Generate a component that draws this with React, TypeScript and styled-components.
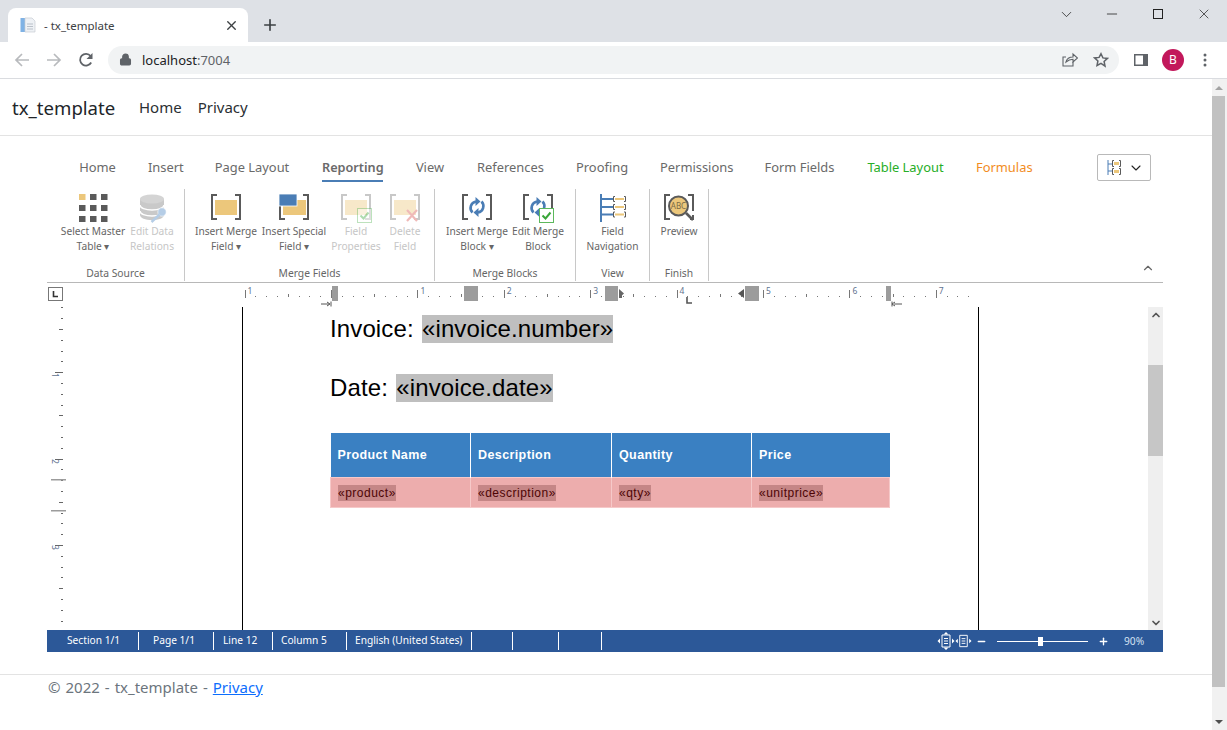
import { Fragment } from "react";
import styled, { createGlobalStyle } from "styled-components";
import { ChevronDown, ChevronUp, Lock, Minus, Plus, X } from "lucide-react";

const UI_FONT = `"Noto Sans", "Open Sans", sans-serif`;
const DOC_FONT = `"Liberation Sans", Arial, sans-serif`;

const GlobalStyle = createGlobalStyle`
  html, body {
    margin: 0;
    padding: 0;
    height: 730px;
    overflow: hidden;
    background: #fff;
    font-family: ${UI_FONT};
  }
  * { box-sizing: border-box; }
`;

const Window = styled.div`
  width: 1227px;
  height: 730px;
  display: flex;
  flex-direction: column;
`;

/* browser chrome */
const TabStrip = styled.div`
  height: 42px;
  background: #dee1e6;
  display: flex;
  align-items: flex-end;
  padding-left: 8px;
`;

const Tab = styled.div`
  position: relative;
  width: 240px;
  height: 34px;
  background: #fff;
  border-radius: 8px 8px 0 0;
  display: flex;
  align-items: center;
  padding: 0 9px 0 12px;
  font-size: 11.5px;
  color: #3c4043;
`;

const TabTitle = styled.span`
  margin-left: 8px;
  flex: 1;
`;

const NewTab = styled.div`
  width: 44px;
  height: 34px;
  display: flex;
  align-items: center;
  justify-content: center;
  color: #3c4043;
`;

const WindowControls = styled.div`
  margin-left: auto;
  align-self: flex-start;
  display: flex;
  height: 28px;
`;

const WindowButton = styled.div`
  width: 46px;
  height: 28px;
  display: flex;
  align-items: center;
  justify-content: center;
  color: #222;
`;

const Toolbar = styled.div`
  height: 37px;
  background: #fff;
  border-bottom: 1px solid #dadce0;
  display: flex;
  align-items: center;
  padding: 0 0 1px 6px;
`;

const NavIcon = styled.div`
  width: 32px;
  height: 28px;
  display: flex;
  align-items: center;
  justify-content: center;
`;

const Omnibox = styled.div`
  width: 1011px;
  height: 28px;
  margin-left: 6px;
  margin-right: 6px;
  border-radius: 14px;
  background: #f1f3f4;
  display: flex;
  align-items: center;
  padding: 0 2px 0 11px;
  color: #5f6368;
`;

const Url = styled.span`
  margin-left: 10px;
  font-size: 13px;
  color: #202124;
  flex: 1;
  & > span {
    color: #5f6368;
  }
`;

const Avatar = styled.div`
  width: 22px;
  height: 22px;
  border-radius: 50%;
  background: #c2185b;
  color: #fff;
  font-size: 12px;
  display: flex;
  align-items: center;
  justify-content: center;
`;

/* page */
const Viewport = styled.div`
  flex: 1;
  display: flex;
  min-height: 0;
`;

const Page = styled.div`
  flex: 1;
  display: flex;
  flex-direction: column;
  min-width: 0;
`;

const OuterScroll = styled.div`
  width: 15px;
  background: #f1f1f1;
  display: flex;
  flex-direction: column;
  align-items: center;
  padding: 0 2px 0 0;
`;

const OuterThumb = styled.div`
  width: 13px;
  height: 591px;
  background: #c1c1c1;
`;

const ArrowBox = styled.div`
  height: ${(p) => p.$h}px;
  display: flex;
  align-items: center;
  justify-content: center;
`;

const Triangle = styled.div`
  width: 0;
  height: 0;
  border-left: 4px solid transparent;
  border-right: 4px solid transparent;
  ${(p) => (p.$down ? "border-top" : "border-bottom")}: 4px solid ${(p) => p.$color};
`;

const Navbar = styled.nav`
  height: 57px;
  border-bottom: 1px solid #e3e3e3;
  display: flex;
  align-items: center;
  padding: 0 12px;
`;

const Brand = styled.div`
  font-size: 18.6px;
  color: #212529;
  width: 127px;
`;

const NavLink = styled.a`
  font-size: 15px;
  color: #2b2f33;
  margin-right: 16px;
`;

const EditorShell = styled.div`
  margin: 18px 0 0 47px;
  width: 1116px;
  display: flex;
  flex-direction: column;
`;

const RibbonTabs = styled.div`
  height: 35px;
  display: flex;
  align-items: flex-start;
  padding-left: 32px;
  position: relative;
`;

const RibbonTab = styled.div`
  height: 28px;
  width: ${(p) => p.$w}px;
  margin-right: 32px;
  white-space: nowrap;
  text-align: center;
  font-size: ${(p) => (p.$active ? 12.7 : 12.9)}px;
  line-height: 27px;
  color: ${(p) => p.$color || "#6a6a6a"};
  font-weight: ${(p) => (p.$active ? 600 : 400)};
  border-bottom: 2px solid ${(p) => (p.$active ? "#4a7db5" : "transparent")};
`;

const LayoutPicker = styled.div`
  position: absolute;
  left: 1050px;
  top: 0;
  width: 54px;
  height: 27px;
  border: 1px solid #b9b9b9;
  border-radius: 2px;
  display: flex;
  align-items: center;
  padding-left: 9px;
  gap: 6px;
`;

const Ribbon = styled.div`
  position: relative;
  height: 94px;
  border-bottom: 1px solid #b8b8b8;
  display: flex;
  align-items: flex-start;
`;

const Group = styled.div`
  height: 92px;
  border-right: 1px solid #c8c8c8;
  width: ${(p) => p.$w}px;
  padding-left: ${(p) => p.$pad}px;
  display: flex;
  flex-direction: column;
`;

const GroupButtons = styled.div`
  flex: 1;
  display: flex;
`;

const GroupLabel = styled.div`
  height: 14px;
  margin-left: ${(p) => -p.$pad}px;
  margin-bottom: 1px;
  text-align: center;
  font-size: 10.3px;
  line-height: 14px;
  color: #666;
`;

const RibbonButton = styled.div`
  width: ${(p) => p.$w}px;
  padding-top: 4px;
  display: flex;
  flex-direction: column;
  align-items: center;
`;

const ButtonText = styled.div`
  margin-top: 1px;
  font-size: 10.2px;
  line-height: 15px;
  text-align: center;
  white-space: nowrap;
  color: ${(p) => (p.$off ? "#c6c6c6" : "#666")};
`;

const Collapse = styled.div`
  position: absolute;
  right: 8px;
  bottom: 7px;
  color: #666;
  display: flex;
`;

const RulerRow = styled.div`
  height: 24px;
  display: flex;
  align-items: flex-start;
`;

const TabStopButton = styled.div`
  width: 15px;
  height: 14px;
  margin: 4px 0 0 1px;
  border: 1px solid #777;
  display: flex;
  align-items: center;
  justify-content: center;
`;

const RulerLeft = styled.div`
  width: 177px;
`;

const EditorRow = styled.div`
  height: 323px;
  display: flex;
  overflow: hidden;
`;

const VerticalRuler = styled.div`
  width: 195px;
`;

const DocPage = styled.div`
  width: 737px;
  height: 323px;
  border-left: 1px solid #000;
  border-right: 1px solid #000;
  padding: 8px 0 0 87px;
  font-family: ${DOC_FONT};
  color: #000;
`;

const DocLine = styled.div`
  font-size: 24px;
  line-height: 28px;
  letter-spacing: 0.12px;
  word-spacing: 1.5px;
  margin-bottom: 31px;
`;

const Field = styled.span`
  background: #bfbfbf;
  display: inline-block;
  height: 28px;
`;

const Table = styled.table`
  border-collapse: collapse;
  table-layout: fixed;
  width: 559px;
`;

const HeadCell = styled.th`
  width: ${(p) => p.$w}px;
  height: 44px;
  background: #3a80c2;
  color: #fff;
  text-align: left;
  padding: 0 0 0 7px;
  font-size: 12.5px;
  letter-spacing: 0.4px;
  font-weight: 700;
  border-left: 1px solid #fff;
  &:first-child {
    border-left: 0;
  }
`;

const BodyCell = styled.td`
  height: 30px;
  background: #edadad;
  padding: 2px 0 0 7px;
  font-size: 12px;
  letter-spacing: 0.5px;
  color: #4d0505;
  border: 1px solid #f6c9c9;
`;

const TableField = styled.span`
  background: #c58686;
  display: inline-block;
  height: 16px;
  line-height: 16px;
`;

const InnerScroll = styled.div`
  margin-left: 169px;
  width: 15px;
  background: #efefef;
  display: flex;
  flex-direction: column;
  align-items: center;
`;

const InnerThumb = styled.div`
  margin-top: 43px;
  width: 15px;
  height: 91px;
  background: #c6c6c6;
`;

const Spacer = styled.div`
  flex: 1;
`;

const StatusBar = styled.div`
  height: 22px;
  background: #2c5898;
  display: flex;
  align-items: center;
  color: #fff;
  font-size: 10.2px;
`;

const StatusCell = styled.div`
  width: ${(p) => p.$w}px;
  height: 18px;
  line-height: 17px;
  padding-left: ${(p) => p.$pad}px;
  border-right: 1px solid #fff;
  white-space: nowrap;
`;

const StatusRight = styled.div`
  margin-left: auto;
  padding-right: 14px;
  display: flex;
  align-items: center;
`;

const ZoomOut = styled.div`
  margin-left: 4px;
  display: flex;
`;

const ZoomSlider = styled.div`
  position: relative;
  width: 91px;
  height: 1px;
  margin: 0 10px;
  background: #fff;
`;

const ZoomThumb = styled.div`
  position: absolute;
  left: 41px;
  top: -4px;
  width: 5px;
  height: 9px;
  background: #fff;
`;

const ZoomValue = styled.div`
  width: 40px;
  padding-left: 15px;
  color: #d5e2f3;
`;

const Footer = styled.footer`
  margin-top: 22px;
  border-top: 1px solid #e3e3e3;
  padding: 0 0 0 48px;
  font-size: 15px;
  line-height: 24px;
  word-spacing: 1.1px;
  color: #6c757d;
  & > a {
    color: #0d6efd;
    text-decoration: underline;
  }
`;

const GRAY = "#5a5a5a";
const GOLD = "#ecc77b";
const BLUE = "#4a7db5";

const Brackets = ({ color = GRAY }: { color?: string }) => (
  <>
    <path d="M7 2H2V26H7" fill="none" stroke={color} strokeWidth="2" />
    <path d="M25 2H30V26H25" fill="none" stroke={color} strokeWidth="2" />
  </>
);

const IconSvg = styled.svg`
  display: block;
  flex: none;
`;

const Icon32 = ({ children }: { children: React.ReactNode }) => (
  <IconSvg width="32" height="30" viewBox="0 0 32 30">
    {children}
  </IconSvg>
);

const CheckBadge = ({ faded }: { faded?: boolean }) => (
  <g opacity={faded ? 0.4 : 1}>
    <rect x="17.5" y="15.5" width="14" height="14" fill="#fff" stroke="#5cb85c" />
    <path d="M20.5 22.5l3 3 5-6" fill="none" stroke="#3aa63a" strokeWidth="2" />
  </g>
);

const Cycle = () => (
  <g>
    <path d="M15 8.5a6.5 6.5 0 0 0-3.5 11" fill="none" stroke={BLUE} strokeWidth="2.6" />
    <path d="M17 19.5a6.5 6.5 0 0 0 3.5-11" fill="none" stroke={BLUE} strokeWidth="2.6" />
    <path d="M14.5 4l5 4.5-5 4.5z" fill={BLUE} />
    <path d="M17.5 15l-5 4.5 5 4.5z" fill={BLUE} />
  </g>
);

const GridIcon = () => (
  <Icon32>
    {[0, 1, 2].map((r) =>
      [0, 1, 2].map((c) => (
        <rect
          key={`${r}-${c}`}
          x={2 + c * 11}
          y={1 + r * 11}
          width="6.5"
          height="6"
          fill={r === 0 && c === 0 ? GOLD : GRAY}
        />
      ))
    )}
  </Icon32>
);

const DatabaseIcon = () => (
  <Icon32>
    <path d="M4 6v16c0 3 5.4 5 12 5s12-2 12-5V6z" fill="#c9c9c9" />
    <ellipse cx="16" cy="6" rx="12" ry="4.5" fill="#d4d4d4" />
    <path d="M4 12c0 3 5.4 5 12 5s12-2 12-5M4 18c0 3 5.4 5 12 5s12-2 12-5" fill="none" stroke="#fff" strokeWidth="1.4" />
    <circle cx="26" cy="19" r="4.2" fill="#b5cde6" stroke="#fff" strokeWidth="0.6" />
    <path d="M23.5 21.5L15.5 29" stroke="#b5cde6" strokeWidth="2.4" />
  </Icon32>
);

const FieldIcon = () => (
  <Icon32>
    <Brackets />
    <rect x="5" y="7" width="22" height="15" fill={GOLD} />
  </Icon32>
);

const SpecialFieldIcon = () => (
  <Icon32>
    <path d="M7 26H2V13M25 2H30V26H25" fill="none" stroke={GRAY} strokeWidth="2" />
    <rect x="5" y="7" width="23" height="15" fill={GOLD} />
    <rect x="1" y="1" width="18" height="12" fill={BLUE} stroke="#fff" strokeWidth="0.8" />
  </Icon32>
);

const FieldPropertiesIcon = () => (
  <Icon32>
    <g opacity="0.4">
      <Brackets color="#777" />
      <rect x="5" y="7" width="22" height="15" fill={GOLD} />
    </g>
    <CheckBadge faded />
  </Icon32>
);

const DeleteFieldIcon = () => (
  <Icon32>
    <g opacity="0.4">
      <Brackets color="#777" />
      <rect x="5" y="7" width="22" height="15" fill={GOLD} />
      <path d="M18 17l10 11M28 17L18 28" stroke="#d9534f" strokeWidth="2.2" />
    </g>
  </Icon32>
);

const BlockIcon = () => (
  <Icon32>
    <Brackets />
    <Cycle />
  </Icon32>
);

const EditBlockIcon = () => (
  <Icon32>
    <Brackets />
    <Cycle />
    <CheckBadge />
  </Icon32>
);

const NavigationIcon = () => (
  <Icon32>
    <path d="M4 1V29M4 6h12M4 14h12M4 21.5h12" stroke={BLUE} strokeWidth="2" fill="none" />
    {[3.5, 11.5, 19].map((y) => (
      <Fragment key={y}>
        <path d={`M18 ${y}h-1.5v5h1.5M27 ${y}h1.5v5h-1.5`} fill="none" stroke={GRAY} />
        <rect x="18" y={y + 1.5} width="9" height="2" fill={GOLD} />
      </Fragment>
    ))}
  </Icon32>
);

const PreviewIcon = () => (
  <Icon32>
    <path d="M7 2H2V26H7M25 2H30V18M30 22v4h-3" fill="none" stroke={GRAY} strokeWidth="2" />
    <circle cx="15.5" cy="13" r="9.5" fill={GOLD} stroke={GRAY} strokeWidth="2" />
    <text x="15.5" y="16" textAnchor="middle" fontSize="8" fill="#7a6a45" fontFamily={UI_FONT}>
      ABC
    </text>
    <path d="M23 20l7 7" stroke={GRAY} strokeWidth="2.6" />
  </Icon32>
);

const MiniLayoutIcon = () => (
  <IconSvg width="15" height="15" viewBox="0 0 15 15">
    <path d="M1 0V15M1 4h4M1 11h4" stroke={BLUE} fill="none" />
    <path d="M7 .5H5.5v6H7M12 .5h1.5v6H12M7 8.5H5.5v6H7M12 8.5h1.5v6H12" stroke={GRAY} fill="none" />
    <rect x="7" y="2" width="5" height="3" fill={GOLD} />
    <rect x="7" y="10" width="5" height="3" fill={GOLD} />
  </IconSvg>
);

const RulerH = () => {
  const origin = 331 - 240;
  const step = 10.8;
  const marks = [];
  for (let i = -8; i <= 59; i++) marks.push(i);
  const labels = [
    [-8, "1"], [8, "1"], [16, "2"], [24, "3"], [32, "4"], [40, "5"], [48, "6"], [56, "7"],
  ] as [number, string][];
  const blocks = [
    [92, 6], [224, 14], [365, 13], [505, 14], [646, 5],
  ];
  return (
    <IconSvg width="740" height="24" viewBox="0 0 740 24">
      {marks.map((i) => {
        const x = Math.round(origin + i * step);
        if (i % 8 === 0) return <rect key={i} x={x} y="7" width="1" height="8" fill="#777" />;
        if (i % 4 === 0) return <rect key={i} x={x} y="11" width="1" height="3" fill="#777" />;
        return <rect key={i} x={x} y="13" width="1" height="1" fill="#777" />;
      })}
      {labels.map(([i, t]) => (
        <text key={i} x={origin + i * step + 3} y="11" fontSize="8.5" fill="#5f7390" fontFamily={UI_FONT}>
          {t}
        </text>
      ))}
      {blocks.map(([x, w]) => (
        <rect key={x} x={x} y="3" width={w} height="15" fill="#9c9c9c" />
      ))}
      <path d="M379 6l5 4.5-5 4.5zM379 10h3v5h-3z" fill="#666" />
      <path d="M504 6l-6 4.5 6 4.5z" fill="#555" />
      <path d="M447 14v6h5" fill="none" stroke="#555" strokeWidth="1.6" />
      <path d="M81 21h8M87 19l3 2-3 2M91 18.5v5" fill="none" stroke="#555" />
      <path d="M662 21h-8M655 19l-3 2 3 2M652 18.5v5" fill="none" stroke="#555" />
    </IconSvg>
  );
};

const RulerV = () => {
  const ticks = [7, 18, 29, 40, 51, 61, 72, 83, 94, 105, 115, 126, 137, 148, 159, 169, 180, 191, 202, 213, 223, 234, 245, 256, 267, 277, 288, 299, 310, 321];
  const longAt = [72, 159, 245];
  const midAt = [29, 115, 202, 288];
  const labels: [string, number][] = [["1", 66], ["2", 152], ["3", 238]];
  return (
    <IconSvg width="30" height="323" viewBox="0 0 30 323">
      {ticks.map((y) => {
        if (longAt.includes(y)) return <rect key={y} x="8" y={y - 7} width="8" height="1" fill="#666" />;
        if (midAt.includes(y)) return <rect key={y} x="12" y={y - 7} width="4" height="1" fill="#666" />;
        return <rect key={y} x="14" y={y - 7} width="2" height="1" fill="#666" />;
      })}
      <rect x="4" y="172" width="15" height="1.5" fill="#9c9c9c" />
      <rect x="4" y="203" width="15" height="1.5" fill="#9c9c9c" />
      {labels.map(([t, y]) => (
        <text key={t} transform={`translate(5 ${y}) rotate(90)`} fontSize="8.5" fill="#5f7390" fontFamily={UI_FONT}>
          {t}
        </text>
      ))}
    </IconSvg>
  );
};

const DocSmall = () => (
  <path d="M5 3h8v12H5zM7 6.5h4M7 9h4M7 11.5h4" fill="none" stroke="#fff" />
);

const StatusIcons = () => (
  <>
    <IconSvg width="18" height="18" viewBox="0 0 18 18">
      <DocSmall />
      <path d="M3 6.5L.5 9 3 11.5zM15 6.5L17.5 9 15 11.5zM6.5 2.5L9 0l2.5 2.5zM6.5 15.5L9 18l2.5-2.5z" fill="#fff" />
    </IconSvg>
    <IconSvg width="17" height="18" viewBox="0 0 18 18">
      <DocSmall />
      <path d="M3 6.5L.5 9 3 11.5zM15 6.5L17.5 9 15 11.5z" fill="#fff" />
    </IconSvg>
  </>
);

const groups = [
  {
    label: "Data Source", w: 138, pad: 11,
    buttons: [
      { w: 70, icon: <GridIcon />, lines: ["Select Master", "Table ▾"] },
      { w: 48, icon: <DatabaseIcon />, lines: ["Edit Data", "Relations"], off: true },
    ],
  },
  {
    label: "Merge Fields", w: 250, pad: 7,
    buttons: [
      { w: 68, icon: <FieldIcon />, lines: ["Insert Merge", "Field ▾"] },
      { w: 68, icon: <SpecialFieldIcon />, lines: ["Insert Special", "Field ▾"] },
      { w: 56, icon: <FieldPropertiesIcon />, lines: ["Field", "Properties"], off: true },
      { w: 42, icon: <DeleteFieldIcon />, lines: ["Delete", "Field"], off: true },
    ],
  },
  {
    label: "Merge Blocks", w: 141, pad: 8,
    buttons: [
      { w: 68, icon: <BlockIcon />, lines: ["Insert Merge", "Block ▾"] },
      { w: 54, icon: <EditBlockIcon />, lines: ["Edit Merge", "Block"] },
    ],
  },
  {
    label: "View", w: 74, pad: 0,
    buttons: [{ w: 73, icon: <NavigationIcon />, lines: ["Field", "Navigation"] }],
  },
  {
    label: "Finish", w: 59, pad: 0,
    buttons: [{ w: 58, icon: <PreviewIcon />, lines: ["Preview"] }],
  },
];

const tabs = [
  { name: "Home", w: 37 },
  { name: "Insert", w: 34 },
  { name: "Page Layout", w: 76 },
  { name: "Reporting", w: 61, active: true },
  { name: "View", w: 30 },
  { name: "References", w: 67 },
  { name: "Proofing", w: 52 },
  { name: "Permissions", w: 72 },
  { name: "Form Fields", w: 71 },
  { name: "Table Layout", w: 77, color: "#27ae27" },
  { name: "Formulas", w: 56, color: "#f28c1e" },
];

const statusCells = [
  { text: "Section 1/1", w: 92, pad: 20 },
  { text: "Page 1/1", w: 75, pad: 14 },
  { text: "Line 12", w: 59, pad: 9 },
  { text: "Column 5", w: 74, pad: 8 },
  { text: "English (United States)", w: 125, pad: 8 },
  { text: "", w: 41, pad: 0 },
  { text: "", w: 46, pad: 0 },
  { text: "", w: 43, pad: 0 },
];

const App = () => (
  <Window>
    <GlobalStyle />
    <TabStrip>
      <Tab>
        <IconSvg width="16" height="16" viewBox="0 0 16 16">
          <rect x="0.5" y="1" width="5" height="14" fill="#7fb2e5" />
          <path d="M5 1h7l3 3v11H5z" fill="#eef1f5" stroke="#c7ccd3" strokeWidth="0.7" />
          <path d="M7 7h6M7 9.5h6M7 12h6" stroke="#b9c0c9" />
        </IconSvg>
        <TabTitle>- tx_template</TabTitle>
        <X size={15} strokeWidth={2.2} color="#3c4043" />
      </Tab>
      <NewTab>
        <Plus size={18} strokeWidth={2.2} />
      </NewTab>
      <WindowControls>
        <WindowButton>
          <ChevronDown size={17} strokeWidth={1.1} />
        </WindowButton>
        <WindowButton>
          <Minus size={16} strokeWidth={1.2} />
        </WindowButton>
        <WindowButton>
          <IconSvg width="10" height="10" viewBox="0 0 10 10">
            <rect x="0.5" y="0.5" width="9" height="9" fill="none" stroke="#222" />
          </IconSvg>
        </WindowButton>
        <WindowButton>
          <X size={16} strokeWidth={1.1} />
        </WindowButton>
      </WindowControls>
    </TabStrip>
    <Toolbar>
      <NavIcon>
        <IconSvg width="16" height="16" viewBox="0 0 16 16">
          <path d="M15 8H2M8 2L2 8l6 6" fill="none" stroke="#b8babd" strokeWidth="1.7" />
        </IconSvg>
      </NavIcon>
      <NavIcon>
        <IconSvg width="16" height="16" viewBox="0 0 16 16">
          <path d="M1 8h13M8 2l6 6-6 6" fill="none" stroke="#b8babd" strokeWidth="1.7" />
        </IconSvg>
      </NavIcon>
      <NavIcon>
        <IconSvg width="16" height="16" viewBox="0 0 16 16">
          <path d="M13.2 10.5A5.9 5.9 0 1 1 12.6 4" fill="none" stroke="#5f6368" strokeWidth="1.8" />
          <path d="M14.5 1v6h-6z" fill="#5f6368" />
        </IconSvg>
      </NavIcon>
      <Omnibox>
        <Lock size={13} strokeWidth={2.4} fill="#5f6368" />
        <Url>
          localhost<span>:7004</span>
        </Url>
        <NavIcon>
          <IconSvg width="17" height="17" viewBox="0 0 17 17">
            <path d="M12 11v4H2V6h3" fill="none" stroke="#5f6368" strokeWidth="1.1" />
            <path d="M5 11c1-4 4-5 7-5V3l4.5 4-4.5 4V8.3c-3 0-5 1-7 2.7z" fill="none" stroke="#5f6368" strokeWidth="1.1" />
          </IconSvg>
        </NavIcon>
        <NavIcon>
          <IconSvg width="16" height="16" viewBox="0 0 16 16">
            <path d="M8 1.8l1.9 4.1 4.5.5-3.3 3.1.9 4.5L8 11.3l-4 2.2.9-4.5-3.3-3.1 4.5-.5z" fill="none" stroke="#5f6368" strokeWidth="1.5" />
          </IconSvg>
        </NavIcon>
      </Omnibox>
      <NavIcon>
        <IconSvg width="14" height="12" viewBox="0 0 14 12">
          <rect width="14" height="12" fill="#5f6368" />
          <rect x="1.5" y="1.5" width="7.5" height="9" fill="#fff" />
        </IconSvg>
      </NavIcon>
      <NavIcon>
        <Avatar>B</Avatar>
      </NavIcon>
      <NavIcon>
        <IconSvg width="4" height="14" viewBox="0 0 4 14">
          <circle cx="2" cy="2" r="1.5" fill="#5f6368" />
          <circle cx="2" cy="7" r="1.5" fill="#5f6368" />
          <circle cx="2" cy="12" r="1.5" fill="#5f6368" />
        </IconSvg>
      </NavIcon>
    </Toolbar>
    <Viewport>
      <Page>
        <Navbar>
          <Brand>tx_template</Brand>
          <NavLink>Home</NavLink>
          <NavLink>Privacy</NavLink>
        </Navbar>
        <EditorShell>
          <RibbonTabs>
            {tabs.map((t) => (
              <RibbonTab key={t.name} $w={t.w} $active={t.active} $color={t.color}>
                {t.name}
              </RibbonTab>
            ))}
            <LayoutPicker>
              <MiniLayoutIcon />
              <ChevronDown size={16} strokeWidth={1.6} color="#222" />
            </LayoutPicker>
          </RibbonTabs>
          <Ribbon>
            {groups.map((g) => (
              <Group key={g.label} $w={g.w} $pad={g.pad}>
                <GroupButtons>
                  {g.buttons.map((b) => (
                    <RibbonButton key={b.lines[0]} $w={b.w}>
                      {b.icon}
                      <ButtonText $off={b.off}>
                        {b.lines.map((l) => (
                          <div key={l}>{l}</div>
                        ))}
                      </ButtonText>
                    </RibbonButton>
                  ))}
                </GroupButtons>
                <GroupLabel $pad={g.pad}>{g.label}</GroupLabel>
              </Group>
            ))}
            <Collapse>
              <ChevronUp size={14} strokeWidth={2} />
            </Collapse>
          </Ribbon>
          <RulerRow>
            <TabStopButton>
              <IconSvg width="7" height="7" viewBox="0 0 7 7">
                <path d="M1.5 0v5.5H6" fill="none" stroke="#333" strokeWidth="1.6" />
              </IconSvg>
            </TabStopButton>
            <RulerLeft />
            <RulerH />
          </RulerRow>
          <EditorRow>
            <VerticalRuler>
              <RulerV />
            </VerticalRuler>
            <DocPage>
              <DocLine>
                Invoice: <Field>«invoice.number»</Field>
              </DocLine>
              <DocLine>
                Date: <Field>«invoice.date»</Field>
              </DocLine>
              <Table>
                <thead>
                  <tr>
                    <HeadCell $w={140}>Product Name</HeadCell>
                    <HeadCell $w={141}>Description</HeadCell>
                    <HeadCell $w={140}>Quantity</HeadCell>
                    <HeadCell $w={138}>Price</HeadCell>
                  </tr>
                </thead>
                <tbody>
                  <tr>
                    <BodyCell><TableField>«product»</TableField></BodyCell>
                    <BodyCell><TableField>«description»</TableField></BodyCell>
                    <BodyCell><TableField>«qty»</TableField></BodyCell>
                    <BodyCell><TableField>«unitprice»</TableField></BodyCell>
                  </tr>
                </tbody>
              </Table>
            </DocPage>
            <InnerScroll>
              <ArrowBox $h={15}>
                <ChevronUp size={12} strokeWidth={3.5} color="#555" />
              </ArrowBox>
              <InnerThumb />
              <Spacer />
              <ArrowBox $h={15}>
                <ChevronDown size={12} strokeWidth={3.5} color="#555" />
              </ArrowBox>
            </InnerScroll>
          </EditorRow>
          <StatusBar>
            {statusCells.map((c, i) => (
              <StatusCell key={i} $w={c.w} $pad={c.pad}>
                {c.text}
              </StatusCell>
            ))}
            <StatusRight>
              <StatusIcons />
              <ZoomOut>
                <Minus size={11} strokeWidth={3} />
              </ZoomOut>
              <ZoomSlider>
                <ZoomThumb />
              </ZoomSlider>
              <Plus size={11} strokeWidth={3} />
              <ZoomValue>90%</ZoomValue>
            </StatusRight>
          </StatusBar>
        </EditorShell>
        <Footer>
          © 2022 - tx_template - <a>Privacy</a>
        </Footer>
      </Page>
      <OuterScroll>
        <ArrowBox $h={17}>
          <Triangle $color="#a3a3a3" />
        </ArrowBox>
        <OuterThumb />
        <Spacer />
        <ArrowBox $h={17}>
          <Triangle $down $color="#505050" />
        </ArrowBox>
      </OuterScroll>
    </Viewport>
  </Window>
);

export default App;
